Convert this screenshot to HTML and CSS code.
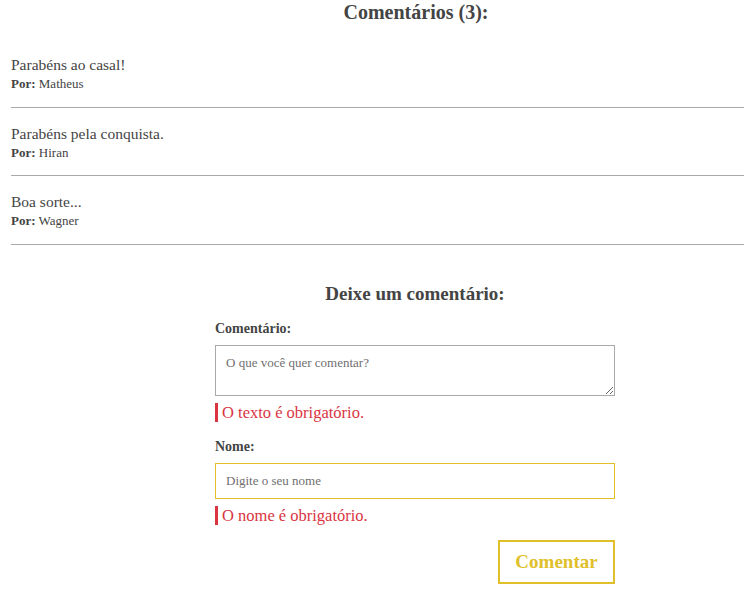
FILE: index.html
```html
<!DOCTYPE html>
<html lang="pt-BR">
<head>
<meta charset="utf-8">
<title>Comentários</title>
<link rel="stylesheet" href="styles.css">
</head>
<body>
<div class="page">
  <h2 class="title">Comentários (3):</h2>
  <ul class="comments">
    <li class="comment">
      <p class="text">Parabéns ao casal!</p>
      <p class="author"><b>Por:</b> Matheus</p>
    </li>
    <li class="comment">
      <p class="text">Parabéns pela conquista.</p>
      <p class="author"><b>Por:</b> Hiran</p>
    </li>
    <li class="comment">
      <p class="text">Boa sorte...</p>
      <p class="author"><b>Por:</b> Wagner</p>
    </li>
  </ul>
  <form class="form">
    <h3 class="form-title">Deixe um comentário:</h3>
    <label class="label" for="c">Comentário:</label>
    <textarea id="c" class="field area" placeholder="O que você quer comentar?"></textarea>
    <div class="error">O texto é obrigatório.</div>
    <label class="label" for="n">Nome:</label>
    <input id="n" class="field input" placeholder="Digite o seu nome">
    <div class="error">O nome é obrigatório.</div>
    <div class="actions"><button type="button" class="btn">Comentar</button></div>
  </form>
</div>
</body>
</html>
```
FILE: styles.css
```css
html, body { margin: 0; padding: 0; overflow-x: hidden; background: #fff; }
body { font-family: "Liberation Serif", serif; color: #444; }
.page { width: 733px; margin-left: 11px; }
.title { margin: 0; padding: 0 0 0 77px; text-align: center; font-size: 20px; line-height: 24px; font-weight: bold; color: #444; }
.comments { list-style: none; margin: 29px 0 0; padding: 0; }
.comment { border-bottom: 1px solid #aaa; height: 67px; }
.comment:last-child { height: 68px; }
.comments .comment:first-child { height: 54px; }
.text { margin: 0; font-size: 15.5px; line-height: 20px; }
.comment .text { padding-top: 16px; }
.comments .comment:first-child .text { padding-top: 2px; }
.author { margin: 0; font-size: 13px; line-height: 18px; }
.author b { font-weight: bold; }
.form { width: 400px; margin: 0 0 0 204px; padding-top: 37px; }
.form-title { margin: 0 0 14px; text-align: center; font-size: 19px; line-height: 24px; font-weight: bold; }
.label { display: block; font-size: 14px; font-weight: bold; line-height: 18px; margin-bottom: 7px; }
.field { display: block; width: 400px; box-sizing: border-box; font-family: "Liberation Serif", serif; font-size: 13px; color: #444; padding: 9px 10px; margin: 0; background: #fff; }
.field::placeholder { color: #6f6f6f; }
.area { height: 51px; border: 1px solid #aaa; resize: vertical; outline: none; }
.input { height: 36px; border: 1px solid #e0bf2b; outline: none; }
.error { margin-top: 7px; border-left: 3px solid #d9343f; padding-left: 4px; color: #d9343f; font-size: 16.5px; line-height: 19px; margin-bottom: 16px; }
.actions { display: flex; justify-content: flex-end; margin-top: -1px; }
.btn { width: 117px; height: 44px; border: 2px solid #e0bf2b; background: #fff; color: #e0bf2b; font-family: "Liberation Serif", serif; font-weight: bold; font-size: 19px; padding: 0; cursor: pointer; }
```
